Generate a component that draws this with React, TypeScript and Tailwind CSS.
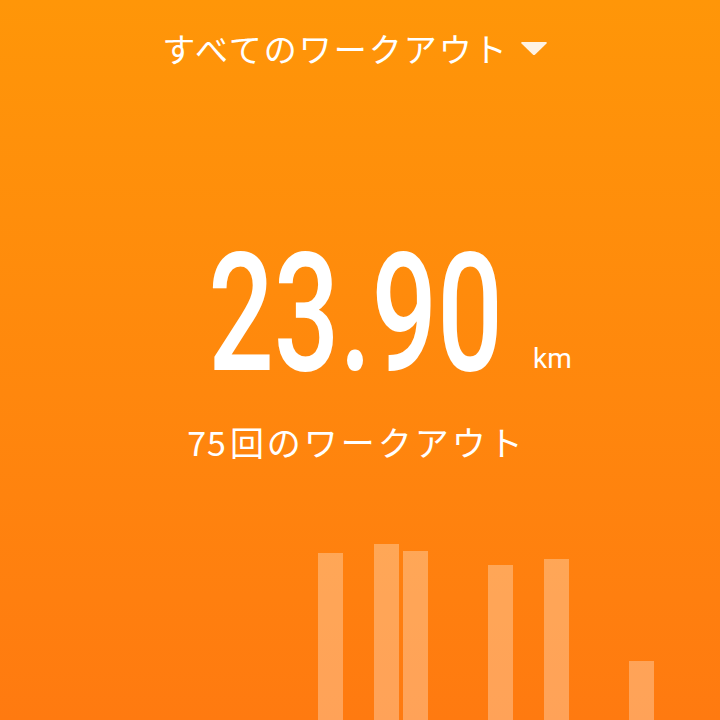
const bars = [
  0, 0, 0, 0, 0, 0, 0, 0, 0, 0, 0, 167, 0, 176, 169, 0, 0, 155, 0, 161, 0, 0, 59, 0, 0,
];

const App = () => {
  return (
    <div className="w-full h-[720px] overflow-hidden flex flex-col bg-linear-to-b from-[#ff9608] to-[#ff7a10] text-white font-['Noto_Sans_CJK_JP','Noto_Sans',sans-serif]">
      <div className="flex flex-col items-center pr-[10px]">
        <div className="h-[96px] flex items-center gap-[11px]">
          <span className="text-[33px] leading-none tracking-[2px]">すべてのワークアウト</span>
          <svg width="28" height="15" viewBox="0 0 28 15">
            <path d="M2 1 L26 1 Q27.5 1 26.5 2.5 L15.2 13.5 Q14 14.5 12.8 13.5 L1.5 2.5 Q0.5 1 2 1 Z" fill="#fff3e3" />
          </svg>
        </div>

        <div className="relative mt-[135px]">
          <div className="w-[290px] flex justify-center">
            <span className="scale-x-70 text-[165px] leading-none font-medium font-['Roboto',sans-serif] whitespace-nowrap">
              23.90
            </span>
          </div>
          <span className="absolute left-full ml-[33px] bottom-[23px] text-[28px] leading-none font-['Roboto',sans-serif]">
            km
          </span>
        </div>

        <div className="mt-[25px] h-[40px] flex items-center text-[34px] tracking-[3px] pl-[3px]">
          <span className="tracking-[1px] mr-[3px]">75</span>回のワークアウト
        </div>
      </div>

      <div className="mt-auto h-[190px] flex items-end gap-[3.33px] pl-[6px]">
        {bars.map((h, i) => (
          <div key={i} className="w-[25px] shrink-0 bg-white/30" style={{ height: h }} />
        ))}
      </div>
    </div>
  );
};

export default App;
